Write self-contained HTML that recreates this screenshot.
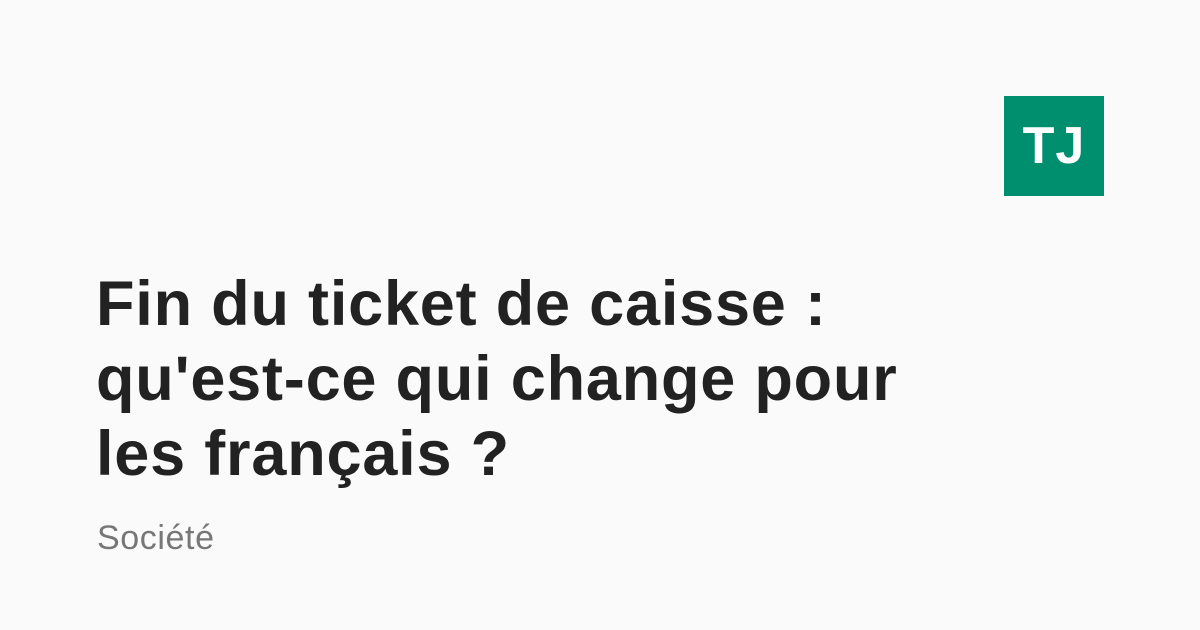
<!DOCTYPE html>
<html><head><style>
html,body{margin:0;padding:0;width:1200px;height:630px;background:#fafafa;overflow:hidden}
.logo{position:absolute;left:1004px;top:96px;width:100px;height:100px;background:#008f6e;color:#fff;font:bold 52px "Liberation Sans",sans-serif;display:flex;align-items:center;justify-content:center;letter-spacing:1px}
h1{position:absolute;left:96px;top:267px;margin:0;font:bold 63px/75px "Liberation Sans",sans-serif;color:#222;letter-spacing:0.8px}
.cat{position:absolute;left:97px;top:519px;font:34px "Liberation Sans",sans-serif;color:#777;letter-spacing:0.6px}
</style></head><body>
<div class="logo">TJ</div>
<h1>Fin du ticket de caisse :<br>qu'est-ce qui change pour<br>les français ?</h1>
<div class="cat">Société</div>
</body></html>
